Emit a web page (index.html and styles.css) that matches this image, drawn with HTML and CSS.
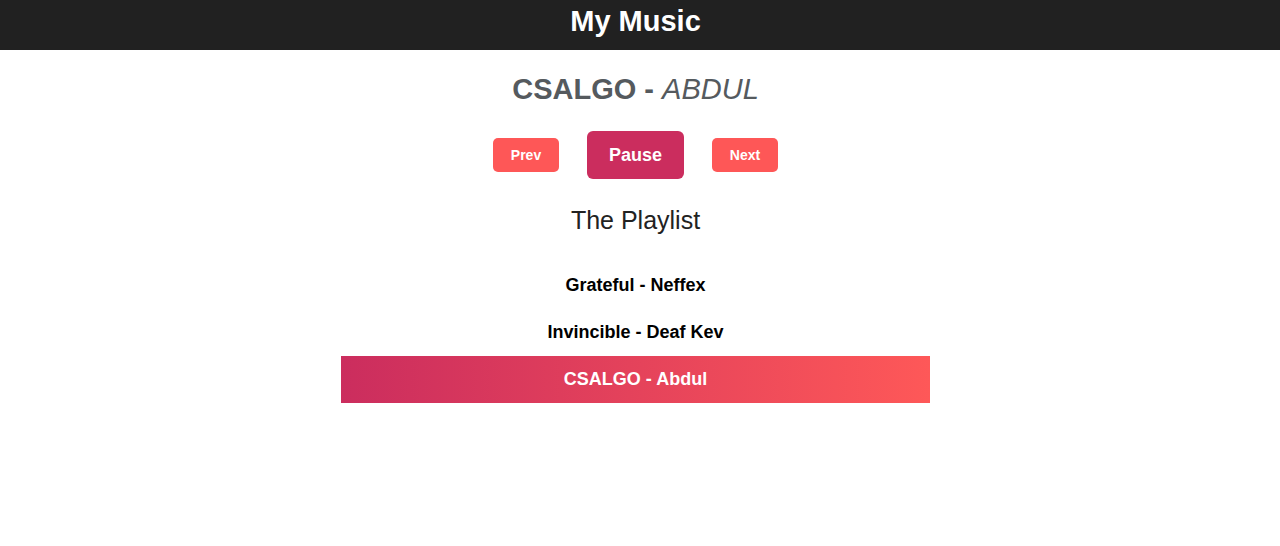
FILE: index.html
```html
<!DOCTYPE html>
<html lang="en">
<head>
<meta charset="utf-8">
<title>My Music</title>
<link rel="stylesheet" href="styles.css">
</head>
<body>
<header class="topbar"><h1 class="brand">My Music</h1></header>
<main class="player">
  <h2 class="now-playing">CSALGO - <em class="artist">ABDUL</em></h2>
  <div class="controls">
    <button class="btn btn-small">Prev</button>
    <button class="btn btn-main">Pause</button>
    <button class="btn btn-small">Next</button>
  </div>
  <h3 class="playlist-title">The Playlist</h3>
  <ul class="playlist">
    <li class="track">Grateful - Neffex</li>
    <li class="track">Invincible - Deaf Kev</li>
    <li class="track active">CSALGO - Abdul</li>
  </ul>
</main>
</body>
</html>
```
FILE: styles.css
```css
* { box-sizing: border-box; }
body {
  margin: 0;
  font-family: "Liberation Sans", Arial, sans-serif;
  background: #fff;
}
.topbar {
  background: #212121;
  height: 50px;
  display: flex;
  align-items: center;
  justify-content: center;
  padding-right: 9px;
}
.brand {
  margin: 0;
  color: #fff;
  font-size: 29px;
  font-weight: bold;
  line-height: 1;
  padding-bottom: 8px;
}
.player {
  display: flex;
  flex-direction: column;
  align-items: center;
  padding-right: 9px;
}
.now-playing {
  margin: 23px 0 0;
  font-size: 29px;
  line-height: 32px;
  color: #555a5e;
  font-weight: bold;
}
.artist { font-weight: normal; }
.controls {
  display: flex;
  align-items: center;
  gap: 28px;
  margin-top: 26px;
}
.btn {
  border: none;
  color: #fff;
  font-family: "Liberation Sans", Arial, sans-serif;
  font-weight: bold;
  border-radius: 5px;
  cursor: pointer;
}
.btn-small {
  width: 66px;
  height: 34px;
  background: #fe5757;
  font-size: 14px;
}
.btn-main {
  width: 97px;
  height: 48px;
  background: #cb2d5e;
  font-size: 18px;
  border-radius: 6px;
}
.playlist-title {
  margin: 26px 0 0;
  font-size: 25px;
  line-height: 30px;
  font-weight: normal;
  color: #222;
}
.playlist {
  list-style: none;
  margin: 27px 0 0;
  padding: 0;
  width: 589px;
}
.track {
  height: 47px;
  display: flex;
  align-items: center;
  justify-content: center;
  font-size: 18px;
  font-weight: bold;
  color: #000;
}
.track.active {
  color: #fff;
  background: linear-gradient(to right, #cb2d5e, #fe5858);
}
```
